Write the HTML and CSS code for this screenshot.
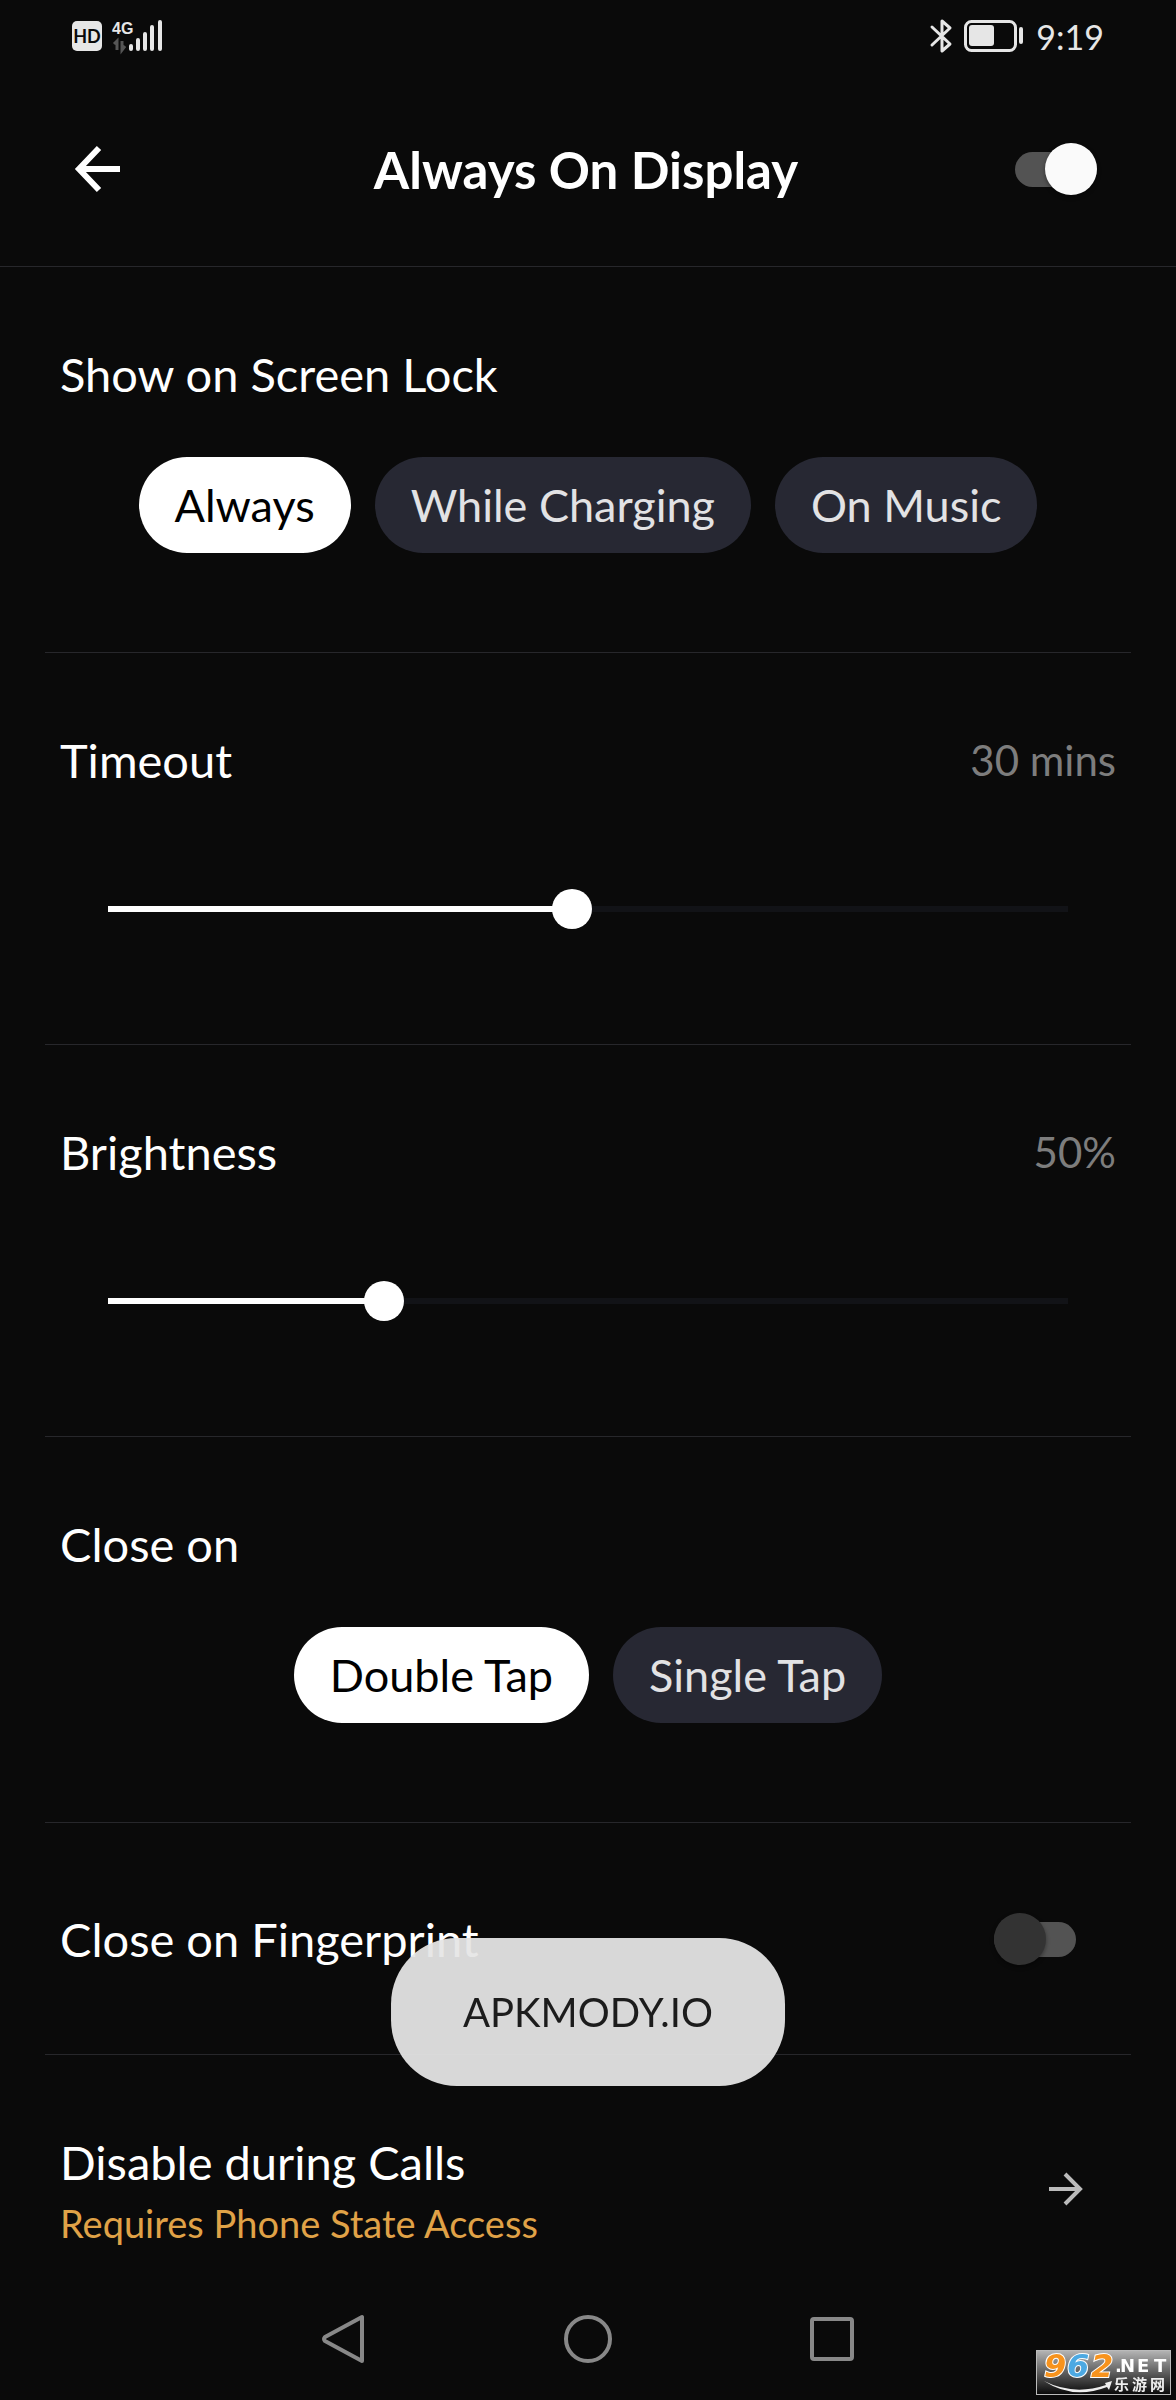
FILE: index.html
```html
<!DOCTYPE html>
<html lang="en">
<head>
    <meta charset="UTF-8">
    <meta name="viewport" content="width=device-width, initial-scale=1.0">
    <title>Always On Display</title>
    <link rel="stylesheet" href="styles.css">
</head>
<body>
    <div class="status">
        <svg class="hd" width="30" height="30" viewBox="0 0 30 30">
            <rect width="30" height="30" rx="5" fill="#e6e6e6"/>
            <text x="15" y="22" text-anchor="middle" font-size="18" font-weight="700" fill="#0a0a0a">HD</text>
        </svg>
        <svg width="52" height="38" viewBox="0 0 52 38">
            <text class="lte" x="0" y="17">4G</text>
            <path d="M5 33V24L2 27M10 24v9l3-4" fill="none" stroke="#555" stroke-width="3"/>
            <path d="M19 29v3M26 23v9M33 17v15M40 10v22M48 5v27" stroke="#e6e6e6" stroke-width="4" stroke-linecap="round"/>
        </svg>
        <div class="status-right">
            <svg width="22" height="34" viewBox="0 0 22 34">
                <path d="M2 8l18 17-8 7V2l8 7L2 26" fill="none" stroke="#e6e6e6" stroke-width="3" stroke-linejoin="round" stroke-linecap="round"/>
            </svg>
            <svg width="60" height="32" viewBox="0 0 60 32">
                <rect x="1.5" y="1.5" width="50" height="29" rx="6" fill="none" stroke="#e6e6e6" stroke-width="3"/>
                <rect x="5" y="5" width="25" height="21" rx="3" fill="#e6e6e6"/>
                <path d="M57 9v13" stroke="#e6e6e6" stroke-width="4" stroke-linecap="round"/>
            </svg>
            <span class="time">9:19</span>
        </div>
    </div>

    <header class="header">
        <button class="back" aria-label="Back">
            <svg width="46" height="46" viewBox="0 0 46 46">
                <path d="M24 2L4 23l20 21M4 23h41" fill="none" stroke="#fff" stroke-width="6"/>
            </svg>
        </button>
        <h1>Always On Display</h1>
        <input type="checkbox" class="switch" aria-label="Always On Display" checked>
    </header>

    <main>
        <section class="block">
            <h2>Show on Screen Lock</h2>
            <div class="pills">
                <button class="pill active">Always</button>
                <button class="pill">While Charging</button>
                <button class="pill">On Music</button>
            </div>
        </section>

        <section class="block">
            <div class="row">
                <label for="timeout">Timeout</label>
                <output for="timeout">30 mins</output>
            </div>
            <input type="range" id="timeout" min="0" max="1000" value="483" style="--fill: 48%">
        </section>

        <section class="block">
            <div class="row">
                <label for="brightness">Brightness</label>
                <output for="brightness">50%</output>
            </div>
            <input type="range" id="brightness" min="0" max="1000" value="278" style="--fill: 28%">
        </section>

        <section class="block">
            <h2>Close on</h2>
            <div class="pills">
                <button class="pill active">Double Tap</button>
                <button class="pill">Single Tap</button>
            </div>
        </section>

        <section class="block compact">
            <div class="row">
                <label for="fingerprint">Close on Fingerprint</label>
                <input type="checkbox" class="switch" id="fingerprint">
            </div>
        </section>

        <section class="block last">
            <a href="#" class="row">
                <span class="calls">
                    <span>Disable during Calls</span>
                    <span class="note">Requires Phone State Access</span>
                </span>
                <svg class="arrow" width="34" height="34" viewBox="0 0 34 34">
                    <path d="M16 1l15 15-15 15M31 16H0" fill="none" stroke="#bbb" stroke-width="4"/>
                </svg>
            </a>
        </section>
    </main>

    <nav class="nav">
        <button aria-label="Back">
            <svg width="48" height="48" viewBox="0 0 48 48">
                <path d="M42 2v44L5 26q-2-2 0-4z" fill="none" stroke="#888" stroke-width="4" stroke-linejoin="round"/>
            </svg>
        </button>
        <button aria-label="Home">
            <svg width="48" height="48" viewBox="0 0 48 48">
                <circle cx="24" cy="24" r="22" fill="none" stroke="#888" stroke-width="4"/>
            </svg>
        </button>
        <button aria-label="Recent apps">
            <svg width="48" height="48" viewBox="0 0 48 48">
                <rect x="4" y="4" width="40" height="40" rx="2" fill="none" stroke="#888" stroke-width="4"/>
            </svg>
        </button>
    </nav>

    <div class="toast">APKMODY.IO</div>

    <svg class="badge" width="135" height="45" viewBox="0 0 135 45">
        <defs>
            <linearGradient id="metal" x1="0" y1="0" x2="0" y2="1">
                <stop offset="0" stop-color="#b5b5b5"/>
                <stop offset="1" stop-color="#080808"/>
            </linearGradient>
        </defs>
        <rect x=".5" y=".5" width="134" height="44" fill="url(#metal)" stroke="#bbb"/>
        <g class="digits">
            <text x="8" y="27" fill="#f7931e">9</text>
            <text x="31" y="27" fill="#4da9e2">6</text>
            <text x="55" y="27" fill="#f7931e">2</text>
        </g>
        <path d="M8 31q30 15 62 4l-1-2 7-2-3 9-2-3q-34 13-63-6z" fill="#eee"/>
        <text class="net" x="79 84 101 118" y="22">.NET</text>
        <text class="cn" x="78 96 114" y="40">乐游网</text>
    </svg>
</body>
</html>
```
FILE: styles.css
```css
* {
    margin: 0;
    padding: 0;
    box-sizing: border-box;
    font-family: Lato, 'Noto Sans CJK SC', sans-serif;
}
body {
    background-color: #0a0a0a;
    color: #fff;
    min-height: 100vh;
    display: flex;
    flex-direction: column;
}
button {
    border: none;
    background: none;
}
svg {
    display: block;
    overflow: visible;
}

/* status bar */
.status {
    height: 72px;
    padding: 0 72px;
    display: flex;
    align-items: center;
}
.hd {
    margin-right: 10px;
}
.lte {
    font-family: 'Liberation Sans', sans-serif;
    font-size: 16px;
    font-weight: 700;
    fill: #e6e6e6;
}
.status-right {
    margin-left: auto;
    display: flex;
    align-items: center;
    gap: 12px;
}
.time {
    font-size: 34px;
    color: #e6e6e6;
}

/* header */
.header {
    height: 195px;
    padding: 0 79px 0 75px;
    border-bottom: 1px solid #27272b;
    display: flex;
    justify-content: space-between;
    align-items: center;
}
.back {
    width: 82px;
}
h1 {
    font-size: 51px;
    font-weight: 700;
}
.switch {
    appearance: none;
    width: 82px;
    height: 52px;
    display: flex;
    align-items: center;
    position: relative;
}
.switch::before {
    content: '';
    width: 100%;
    height: 35px;
    border-radius: 18px;
    background-color: #535353;
}
.switch::after {
    content: '';
    position: absolute;
    left: 0;
    width: 52px;
    height: 52px;
    border-radius: 50%;
    background-color: #333;
    box-shadow: 0 2px 4px rgba(0,0,0,.4);
}
.switch:checked::after {
    left: auto;
    right: 0;
    background-color: #fafafa;
}

/* settings */
.block {
    margin: 0 45px;
    padding: 77px 15px 99px;
    border-bottom: 1px solid #27272b;
    font-size: 47px;
    line-height: 60px;
}
.block h2 {
    font-size: 47px;
    font-weight: 400;
}
.pills {
    margin-top: 53px;
    display: flex;
    justify-content: center;
    gap: 24px;
}
.pill {
    height: 96px;
    padding: 0 36px;
    border-radius: 48px;
    background-color: #272833;
    color: #e2e2e4;
    font-size: 45px;
}
.pill.active {
    background-color: #fff;
    color: #000;
}
.row {
    display: flex;
    justify-content: space-between;
    align-items: center;
    color: #fff;
    text-decoration: none;
}
output {
    font-size: 42px;
    color: #7d7d7d;
}
input[type=range] {
    appearance: none;
    display: block;
    width: calc(100% - 96px);
    height: 40px;
    margin: 99px 48px 16px;
    background: linear-gradient(to right, #fff var(--fill), #121317 var(--fill)) center / 100% 6px no-repeat;
}
input[type=range]::-webkit-slider-thumb {
    appearance: none;
    width: 40px;
    height: 40px;
    border-radius: 50%;
    background-color: #fff;
}
.compact {
    padding: 86px 15px 85px;
}
.compact .switch {
    margin-right: 40px;
}
.last {
    padding-bottom: 0;
    border-bottom: none;
}
.calls {
    display: flex;
    flex-direction: column;
    gap: 7px;
}
.note {
    font-size: 38px;
    line-height: 48px;
    color: #e0a247;
}
.arrow {
    margin-right: 33px;
}

/* bottom navigation */
.nav {
    height: 122px;
    margin-top: auto;
    display: flex;
    justify-content: center;
    align-items: center;
    gap: 196px;
}

.toast {
    position: fixed;
    left: 50%;
    bottom: 314px;
    transform: translateX(-50%);
    padding: 44px 72px;
    border-radius: 66px;
    background-color: rgba(229,229,229,.94);
    color: #1c1c1c;
    font-size: 40px;
    line-height: 60px;
}
.badge {
    position: fixed;
    right: 5px;
    bottom: 5px;
}
.digits text {
    font-family: 'DejaVu Sans', sans-serif;
    font-size: 32px;
    font-weight: 700;
    font-style: italic;
    stroke: #fff;
    stroke-width: 2px;
    paint-order: stroke;
}
.net {
    font-family: 'DejaVu Sans', sans-serif;
    font-size: 18px;
    font-weight: 700;
    fill: #fff;
}
.cn {
    font-size: 15px;
    font-weight: 700;
    fill: #eee;
}
```
